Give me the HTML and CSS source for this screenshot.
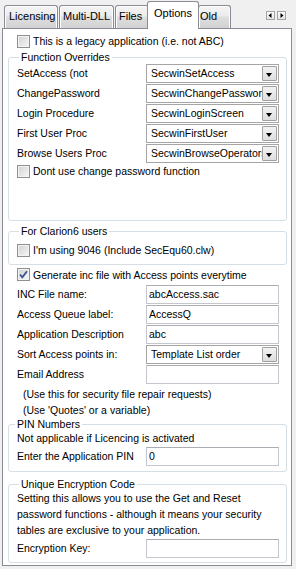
FILE: index.html
```html
<!DOCTYPE html>
<html>
<head>
    <title>Options</title>
    <meta charset="utf-8">
    <link rel="stylesheet" href="styles.css">
</head>
<body>
    <div class="tabstrip">
        <div class="tab tab-licensing">Licensing</div>
        <div class="tab tab-multi">Multi-DLL</div>
        <div class="tab tab-files">Files</div>
        <div class="tab tab-options active">Options</div>
        <div class="tab tab-old">Old</div>
        <div class="scroller">
            <span class="scroll-btn"><svg width="7" height="7" viewBox="0 0 7 7"><polygon points="4.5,1 1.5,3.5 4.5,6" fill="#000"/></svg></span>
            <span class="scroll-btn"><svg width="7" height="7" viewBox="0 0 7 7"><polygon points="2.5,1 5.5,3.5 2.5,6" fill="#000"/></svg></span>
        </div>
    </div>

    <div class="panel">
        <div class="check-row top-row"><span class="check"></span>This is a legacy application (i.e. not ABC)</div>

        <fieldset class="group overrides">
            <legend>Function Overrides</legend>
            <div class="row"><label>SetAccess (not</label><div class="combo"><span>SecwinSetAccess</span><i class="drop"></i></div></div>
            <div class="row"><label>ChangePassword</label><div class="combo"><span>SecwinChangePassword</span><i class="drop"></i></div></div>
            <div class="row"><label>Login Procedure</label><div class="combo"><span>SecwinLoginScreen</span><i class="drop"></i></div></div>
            <div class="row"><label>First User Proc</label><div class="combo"><span>SecwinFirstUser</span><i class="drop"></i></div></div>
            <div class="row"><label>Browse Users Proc</label><div class="combo"><span>SecwinBrowseOperators</span><i class="drop"></i></div></div>
            <div class="check-row short"><span class="check"></span>Dont use change password function</div>
        </fieldset>

        <fieldset class="group clarion">
            <legend>For Clarion6 users</legend>
            <div class="check-row"><span class="check"></span>I'm using 9046 (Include SecEqu60.clw)</div>
        </fieldset>

        <div class="check-row outer generate"><span class="check checked"><svg width="11" height="11" viewBox="0 0 11 11"><path d="M2 5.5 L4.3 8.3 L9 2.2" fill="none" stroke="#3c5190" stroke-width="1.8"/></svg></span>Generate inc file with Access points everytime</div>
        <div class="row outer"><label>INC File name:</label><div class="textbox">abcAccess.sac</div></div>
        <div class="row outer"><label>Access Queue label:</label><div class="textbox">AccessQ</div></div>
        <div class="row outer"><label>Application Description</label><div class="textbox">abc</div></div>
        <div class="row outer"><label>Sort Access points in:</label><div class="combo"><span>Template List order</span><i class="drop"></i></div></div>
        <div class="row outer"><label>Email Address</label><div class="textbox"></div></div>
        <div class="notes">
            <div>(Use this for security file repair requests)</div>
            <div>(Use 'Quotes' or a variable)</div>
        </div>

        <fieldset class="group pin">
            <legend>PIN Numbers</legend>
            <div class="text-line">Not applicable if Licencing is activated</div>
            <div class="row"><label>Enter the Application PIN</label><div class="textbox">0</div></div>
        </fieldset>

        <fieldset class="group encryption">
            <legend>Unique Encryption Code</legend>
            <div class="text-line">Setting this allows you to use the Get and Reset</div>
            <div class="text-line">password functions - although it means your security</div>
            <div class="text-line">tables are exclusive to your application.</div>
            <div class="row"><label>Encryption Key:</label><div class="textbox"></div></div>
        </fieldset>
    </div>
</body>
</html>
```

FILE: styles.css
```css
html, body {
    margin: 0;
    padding: 0;
}

body {
    width: 296px;
    height: 569px;
    overflow: hidden;
    background: #f0f0f0;
    font-family: "Liberation Sans", Arial, sans-serif;
    font-size: 10.5px;
    color: #000;
}

/* tab strip */
.tabstrip {
    display: flex;
    align-items: flex-end;
    height: 28px;
    padding-left: 4px;
}

.tab {
    box-sizing: border-box;
    height: 23px;
    line-height: 21px;
    padding-left: 3px;
    margin-right: 1px;
    border: 1px solid #898c95;
    border-bottom: none;
    border-radius: 3px 3px 0 0;
    background: linear-gradient(#f4f4f4, #ececec 45%, #dedede 50%, #d2d2d2);
    box-shadow: inset 1px 1px 0 #fcfcfc, inset -1px 0 0 #fcfcfc;
    font-size: 11px;
    white-space: nowrap;
    overflow: hidden;
}

.tab-licensing { width: 54px; padding-left: 4px; }
.tab-multi { width: 55px; }
.tab-files { width: 34px; }
.tab-old { width: 33px; padding-left: 1px; }

.tab.active {
    position: relative;
    z-index: 1;
    width: 52px;
    height: 28px;
    line-height: 22px;
    padding-left: 6px;
    margin: 0 -1px -1px -3px;
    background: #fff;
    box-shadow: none;
}

.scroller {
    display: flex;
    gap: 2px;
    align-self: flex-start;
    margin: 11px 10px 0 auto;
}

.scroll-btn {
    box-sizing: border-box;
    width: 9px;
    height: 9px;
    border: 1px solid #a4a4a4;
    background: linear-gradient(#fdfdfd, #e6e6e6);
    display: flex;
}

/* tab page */
.panel {
    margin: 0 4px 0 2px;
    padding: 2px 4px 2px 5px;
    border: 1px solid #898c95;
    background: #fff;
}

.group {
    margin: 0;
    padding: 0 7px 0 8px;
    min-width: 0;
    border: 1px solid #d5dfe5;
    border-radius: 3px;
}

.group legend {
    padding: 0 2px;
    margin-left: 2px;
    line-height: 12px;
}

.overrides { padding-bottom: 41px; }
.clarion { margin-top: 4px; padding-top: 4px; padding-bottom: 5px; }
.pin { padding-bottom: 5px; }
.pin legend { margin-left: -2px; }
.encryption { margin-top: 6px; padding-bottom: 4px; }

.row {
    display: flex;
    height: 20px;
}

.row label {
    width: 129px;
    line-height: 20px;
    white-space: nowrap;
}

.outer { padding-left: 9px; }

.check-row {
    display: flex;
    align-items: center;
    height: 18px;
    white-space: nowrap;
}

.top-row { height: 20px; padding-left: 9px; }
.check-row.short { height: 16px; }
.generate { height: 19px; }

.check {
    box-sizing: border-box;
    width: 13px;
    height: 13px;
    margin-right: 3px;
    border: 1px solid #8e8f8f;
    background: linear-gradient(135deg, #cfd1d4, #f7f7f7);
    box-shadow: inset 0 0 0 1px #f3f3f3;
    display: flex;
    align-items: center;
    justify-content: center;
}

.textbox, .combo {
    box-sizing: border-box;
    width: 133px;
    height: 19px;
    margin-top: 1px;
    border: 1px solid #c3c6cc;
    border-top-color: #abadb3;
    background: #fff;
    white-space: nowrap;
    overflow: hidden;
}

.textbox {
    padding-left: 2px;
    line-height: 17px;
}

.combo {
    display: flex;
    padding: 1px;
    border-color: #a5a5a5;
}

.combo span {
    flex: 1;
    overflow: hidden;
    padding-left: 3px;
    line-height: 15px;
}

.drop {
    box-sizing: border-box;
    flex: none;
    width: 15px;
    height: 15px;
    border: 1px solid #a0a0a0;
    border-radius: 1px;
    background: linear-gradient(#f3f3f3, #dedede);
    position: relative;
}

.drop::after {
    content: "";
    position: absolute;
    left: 3px;
    top: 6px;
    border-left: 3.5px solid transparent;
    border-right: 3.5px solid transparent;
    border-top: 4px solid #000;
}

.notes {
    margin-top: 2px;
    padding-left: 15px;
    line-height: 16px;
}

.text-line {
    line-height: 16px;
    white-space: nowrap;
}
```
